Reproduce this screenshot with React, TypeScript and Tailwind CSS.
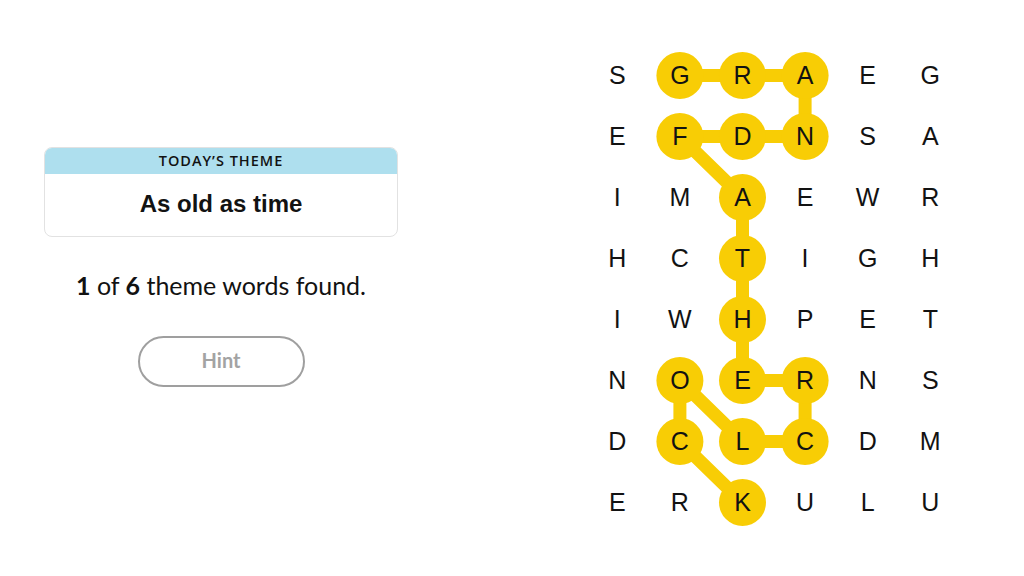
import React from "react";

const ROWS = [
  "SGRAEG",
  "EFDNSA",
  "IMAEWR",
  "HCTIGH",
  "IWHPET",
  "NOERNS",
  "DCLCDM",
  "ERKULU",
];

const PATH: [number, number][] = [
  [0, 1], [0, 2], [0, 3], [1, 3], [1, 2], [1, 1], [2, 2], [3, 2], [4, 2],
  [5, 2], [5, 3], [6, 3], [6, 2], [5, 1], [6, 1], [7, 2],
];

const CW = 62.6;
const CH = 61;
const YELLOW = "#f8cd05";

function cx(c: number) {
  return c * CW + CW / 2;
}
function cy(r: number) {
  return r * CH + CH / 2;
}

function Board() {
  const points = PATH.map(([r, c]) => `${cx(c)},${cy(r)}`).join(" ");
  return (
    <div className="relative w-[376px] h-[488px]">
      <svg className="absolute inset-0" width={376} height={488}>
        <polyline points={points} fill="none" stroke={YELLOW} strokeWidth={13} strokeLinejoin="round" />
        {PATH.map(([r, c]) => (
          <circle key={`${r}-${c}`} cx={cx(c)} cy={cy(r)} r={23.5} fill={YELLOW} />
        ))}
      </svg>
      <div className="relative grid grid-cols-[repeat(6,62.6px)] grid-rows-[repeat(8,61px)]">
        {ROWS.map((row, r) =>
          row.split("").map((ch, c) => (
            <div
              key={`${r}-${c}`}
              className="flex items-center justify-center text-[25px] leading-none text-[#121212]"
              style={{ fontFamily: '"Liberation Sans", Arial, sans-serif' }}
            >
              {ch}
            </div>
          ))
        )}
      </div>
    </div>
  );
}

export default function App() {
  return (
    <div className="w-[1024px] h-[576px] bg-white flex overflow-hidden">
      <div className="ml-[44px] mt-[147px] w-[354px] flex flex-col items-center">
        <div className="w-full h-[90px] rounded-[8px] border border-[#e2e2e2] overflow-hidden flex flex-col">
          <div
            className="h-[26px] bg-[#aedfee] flex items-center justify-center text-[14.5px] font-semibold tracking-[1px] text-[#121212]"
            style={{ fontFamily: '"Open Sans", "Liberation Sans", sans-serif' }}
          >
            TODAY’S THEME
          </div>
          <div
            className="flex-1 flex items-center justify-center pb-[2px] text-[24px] font-bold text-[#121212]"
            style={{ fontFamily: '"Liberation Sans", Arial, sans-serif' }}
          >
            As old as time
          </div>
        </div>
        <div
          className="mt-[33px] text-[25px] leading-[30px] text-[#121212]"
          style={{ fontFamily: "Lato, sans-serif" }}
        >
          <span className="font-bold">1</span> of <span className="font-bold">6</span> theme words found.
        </div>
        <button
          className="mt-[36px] w-[167px] h-[51px] rounded-full border-2 border-[#9f9f9f] text-[#a3a3a3] text-[20px] font-bold flex items-center justify-center pb-[3px]"
          style={{ fontFamily: "Lato, sans-serif" }}
        >
          Hint
        </button>
      </div>
      <div className="ml-[188px] mt-[45px]">
        <Board />
      </div>
    </div>
  );
}
